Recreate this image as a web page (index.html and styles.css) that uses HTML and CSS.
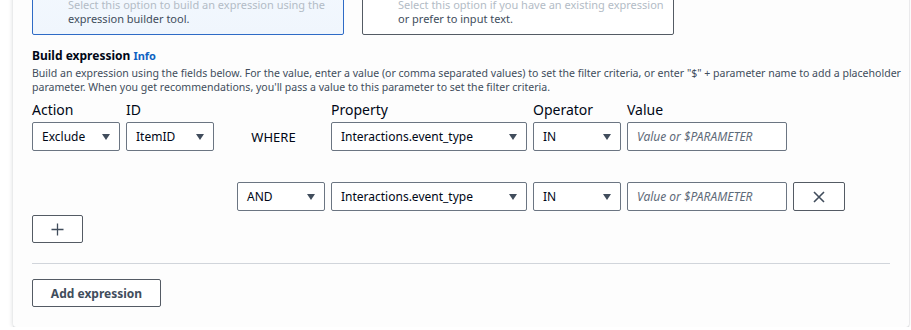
FILE: index.html
```html
<!DOCTYPE html>
<html lang="en">
<head>
  <meta charset="UTF-8" />
  <title>Build expression</title>
  <link rel="stylesheet" href="styles.css">
</head>
<body>
<div class="panel">
  <div class="tiles">
    <div class="tile selected">
      <div class="tile-hint">Select this option to build an expression using the</div>
      <div class="tile-desc">expression builder tool.</div>
    </div>
    <div class="tile">
      <div class="tile-hint">Select this option if you have an existing expression</div>
      <div class="tile-desc">or prefer to input text.</div>
    </div>
  </div>

  <div class="section-title">Build expression <a class="info" href="#">Info</a></div>
  <div class="section-desc">
    Build an expression using the fields below. For the value, enter a value (or comma separated values) to set the filter criteria, or enter "$" + parameter name to add a placeholder<br>
    parameter. When you get recommendations, you'll pass a value to this parameter to set the filter criteria.
  </div>

  <div class="builder">
    <div class="label">Action</div>
    <div class="label">ID</div>
    <div></div>
    <div class="label">Property</div>
    <div class="label">Operator</div>
    <div class="label">Value</div>
    <div></div>

    <div class="select">Exclude<span class="caret"></span></div>
    <div class="select">ItemID<span class="caret"></span></div>
    <div class="where">WHERE</div>
    <div class="select">Interactions.event_type<span class="caret"></span></div>
    <div class="select">IN<span class="caret"></span></div>
    <div class="input">Value or $PARAMETER</div>
    <div></div>

    <div class="spacer"></div>
    <div class="spacer"></div>
    <div class="spacer"></div>
    <div class="spacer"></div>
    <div class="spacer"></div>
    <div class="spacer"></div>
    <div class="spacer"></div>

    <div></div>
    <div></div>
    <div class="select and">AND<span class="caret"></span></div>
    <div class="select">Interactions.event_type<span class="caret"></span></div>
    <div class="select">IN<span class="caret"></span></div>
    <div class="input">Value or $PARAMETER</div>
    <button class="icon-btn remove">
      <svg width="12" height="12" viewBox="0 0 12 12"><path d="M1 1 L11 11 M11 1 L1 11" stroke="#414d5c" stroke-width="1.6" fill="none"/></svg>
    </button>
  </div>

  <button class="icon-btn add">
    <svg width="13" height="13" viewBox="0 0 13 13"><path d="M6.5 0.5 V12.5 M0.5 6.5 H12.5" stroke="#414d5c" stroke-width="1.3" fill="none"/></svg>
  </button>

  <div class="divider"></div>

  <button class="btn">Add expression</button>
</div>
</body>
</html>
```

FILE: styles.css
```css
body {
  margin: 0;
  padding: 0;
  background: #ffffff;
  font-family: "Noto Sans", "Open Sans", sans-serif;
  color: #000716;
}
.panel {
  margin: -20px 2px 0 13px;
  padding: 0 19px 20px 19px;
  background: #fdfdfd;
  box-shadow: 0 1px 1px rgba(0, 28, 36, 0.15), -1px 0 4px rgba(0, 28, 36, 0.12), 1px 0 1px rgba(0, 28, 36, 0.05);
  border-radius: 0 0 3px 3px;
}
.tiles {
  display: flex;
  gap: 18px;
}
.tile {
  width: 275px;
  padding: 17px 0 8px 35px;
  border: 1px solid #545b64;
  border-radius: 0 0 2px 2px;
  background: #ffffff;
  font-size: 11px;
  line-height: 14px;
}
.tile.selected {
  border-color: #2e6bc6;
  background: linear-gradient(#f3f8fe, #f0f6fd);
}
.tile-hint {
  color: #b3bcc6;
}
.tile-desc {
  color: #414d5c;
}
.section-title {
  margin-top: 13px;
  font-size: 12px;
  line-height: 16px;
  font-weight: 700;
}
.info {
  color: #0f62c2;
  font-size: 11px;
  text-decoration: none;
}
.section-desc {
  margin: 2px -16px 0 0;
  font-size: 10.55px;
  line-height: 14px;
  color: #414d5c;
  white-space: nowrap;
}
.builder {
  margin-top: 7px;
  display: grid;
  grid-template-columns: 88px 88px 105px 196px 88px 160px 52px;
  column-gap: 6px;
  align-items: center;
}
.label {
  font-size: 14px;
  line-height: 18px;
  margin-bottom: 3px;
}
.select,
.input {
  box-sizing: border-box;
  height: 29px;
  border: 1px solid #6b7582;
  border-radius: 2px;
  background: #ffffff;
  display: flex;
  align-items: center;
  justify-content: space-between;
  padding: 0 9px;
  font-size: 12px;
}
.input {
  font-style: italic;
  color: #5f6b7a;
}
.caret {
  width: 0;
  height: 0;
  border-left: 4px solid transparent;
  border-right: 4px solid transparent;
  border-top: 6px solid #414d5c;
}
.where {
  font-size: 13px;
  text-align: center;
  padding-left: 2px;
}
.spacer {
  height: 31px;
}
.and {
  width: 88px;
  justify-self: end;
}
.icon-btn {
  box-sizing: border-box;
  height: 29px;
  border: 1px solid #545b64;
  border-radius: 2px;
  background: #ffffff;
  display: flex;
  align-items: center;
  justify-content: center;
  padding: 0;
  cursor: pointer;
}
.remove {
  width: 52px;
}
.add {
  width: 51px;
  height: 28px;
  margin-top: 4px;
}
.divider {
  margin-top: 20px;
  height: 1px;
  background: #d1d5db;
}
.btn {
  margin-top: 15px;
  width: 129px;
  height: 28px;
  border: 1px solid #545b64;
  border-radius: 2px;
  background: #ffffff;
  color: #414d5c;
  font-family: "Noto Sans", "Open Sans", sans-serif;
  font-size: 12px;
  font-weight: 700;
  cursor: pointer;
}
```
